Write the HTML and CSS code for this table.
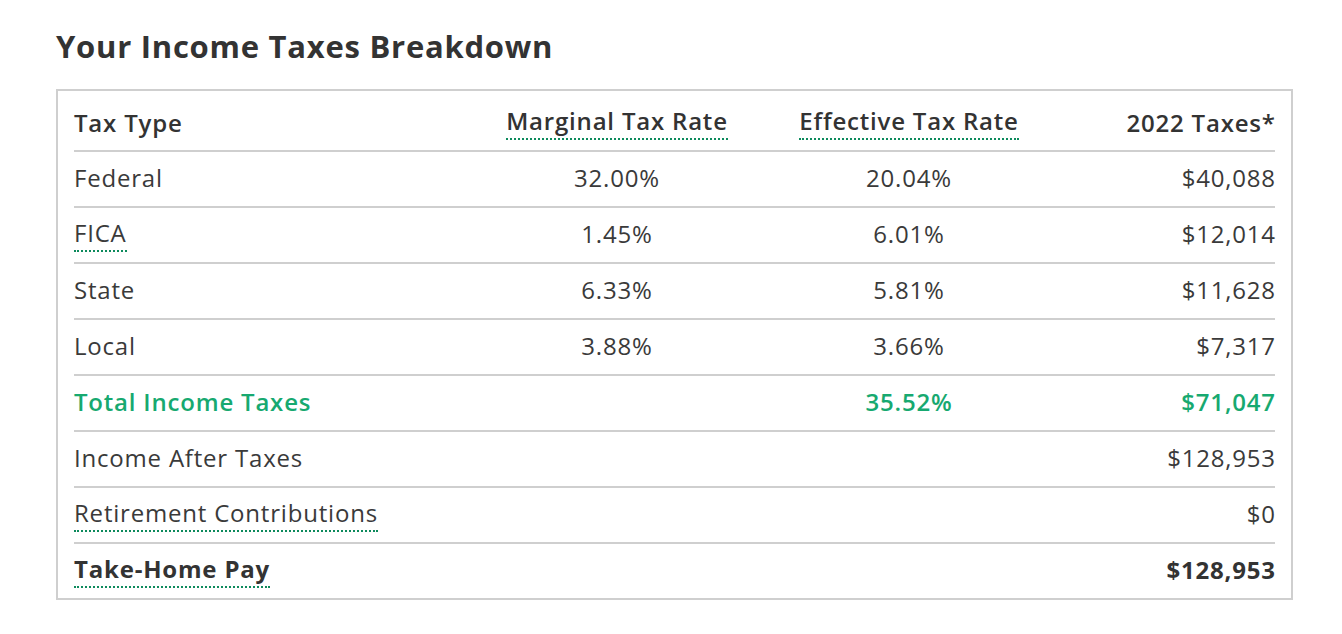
FILE: index.html
```html
<!DOCTYPE html>
<html lang="en">
<head>
<meta charset="utf-8">
<title>Your Income Taxes Breakdown</title>
<link rel="stylesheet" href="styles.css">
</head>
<body>
<main class="wrap">
  <h2 class="title">Your Income Taxes Breakdown</h2>
  <div class="box">
    <div class="row head">
      <div class="c1">Tax Type</div>
      <div class="c2"><span class="tip">Marginal Tax Rate</span></div>
      <div class="c3"><span class="tip">Effective Tax Rate</span></div>
      <div class="c4">2022 Taxes*</div>
    </div>
    <div class="row">
      <div class="c1">Federal</div>
      <div class="c2">32.00%</div>
      <div class="c3">20.04%</div>
      <div class="c4">$40,088</div>
    </div>
    <div class="row">
      <div class="c1"><span class="tip">FICA</span></div>
      <div class="c2">1.45%</div>
      <div class="c3">6.01%</div>
      <div class="c4">$12,014</div>
    </div>
    <div class="row">
      <div class="c1">State</div>
      <div class="c2">6.33%</div>
      <div class="c3">5.81%</div>
      <div class="c4">$11,628</div>
    </div>
    <div class="row">
      <div class="c1">Local</div>
      <div class="c2">3.88%</div>
      <div class="c3">3.66%</div>
      <div class="c4">$7,317</div>
    </div>
    <div class="row total">
      <div class="c1">Total Income Taxes</div>
      <div class="c2"></div>
      <div class="c3">35.52%</div>
      <div class="c4">$71,047</div>
    </div>
    <div class="row">
      <div class="c1">Income After Taxes</div>
      <div class="c2"></div>
      <div class="c3"></div>
      <div class="c4">$128,953</div>
    </div>
    <div class="row">
      <div class="c1"><span class="tip">Retirement Contributions</span></div>
      <div class="c2"></div>
      <div class="c3"></div>
      <div class="c4">$0</div>
    </div>
    <div class="row final">
      <div class="c1"><span class="tip">Take-Home Pay</span></div>
      <div class="c2"></div>
      <div class="c3"></div>
      <div class="c4">$128,953</div>
    </div>
  </div>
</main>
</body>
</html>
```

FILE: styles.css
```css
* { box-sizing: border-box; }

html, body {
  margin: 0;
  padding: 0;
  background: #ffffff;
}

body {
  font-family: "Open Sans", "Liberation Sans", sans-serif;
  color: #333333;
}

.wrap {
  width: 1237px;
  margin-left: 56px;
  padding-top: 26px;
}

.title {
  margin: 0 0 23px 0;
  font-size: 31px;
  line-height: 40px;
  font-weight: 700;
  letter-spacing: 0.75px;
  color: #333333;
}

.box {
  border: 2px solid #cfcfcf;
  padding: 0 16px;
}

.row {
  display: grid;
  grid-template-columns: 397px 292px 292px 220px;
  align-items: center;
  height: 56px;
  padding-bottom: 3px;
  border-bottom: 2px solid #cfcfcf;
  font-size: 24px;
  letter-spacing: 0.8px;
  color: #3a3a3a;
}

.row.head {
  height: 61px;
  padding-top: 4px;
  padding-bottom: 1px;
  font-weight: 600;
  color: #333333;
}

.row.final {
  border-bottom: none;
  height: 54px;
  font-weight: 700;
  color: #333333;
}

.row.total {
  color: #17a970;
  font-weight: 600;
}

.c1 { text-align: left; }
.c2, .c3 { text-align: center; }
.c4 { text-align: right; margin-right: -0.8px; }

.tip {
  display: inline-block;
  line-height: 28px;
  margin-top: 3px;
  padding-bottom: 3px;
  border-bottom: 2px dotted #0d8a5c;
}
```
